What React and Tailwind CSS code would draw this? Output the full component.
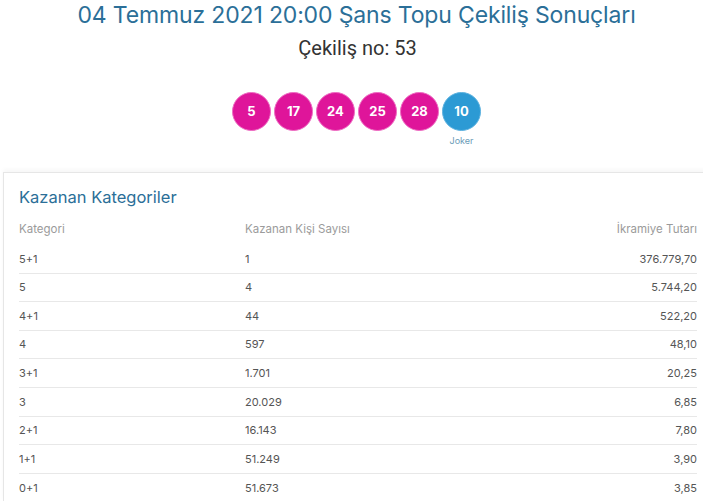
import React from "react";

const rows = [
  ["5+1", "1", "376.779,70"],
  ["5", "4", "5.744,20"],
  ["4+1", "44", "522,20"],
  ["4", "597", "48,10"],
  ["3+1", "1.701", "20,25"],
  ["3", "20.029", "6,85"],
  ["2+1", "16.143", "7,80"],
  ["1+1", "51.249", "3,90"],
  ["0+1", "51.673", "3,85"],
];

const balls = ["5", "17", "24", "25", "28"];

export default function App() {
  return (
    <div className="w-[703px] h-[501px] overflow-hidden bg-white" style={{ fontFamily: "Inter, 'Noto Sans', sans-serif" }}>
      <div className="h-[30px] flex items-center justify-center pl-[10px] text-[23px] text-[#2b6f98] tracking-[-0.15px]">
        04 Temmuz 2021 20:00 Şans Topu Çekiliş Sonuçları
      </div>
      <div className="h-[36px] flex items-center justify-center pl-[12px] text-[20px] text-[#333]" style={{ fontFamily: "Roboto, sans-serif" }}>
        Çekiliş no: 53
      </div>
      <div className="mt-[26px] flex justify-center gap-[3px] pl-[10px]">
        {balls.map((b) => (
          <div key={b} className="w-[39px] h-[39px] rounded-full bg-[#df159a] border border-[#ee6cc2] flex items-center justify-center text-white text-[13px] font-bold">
            {b}
          </div>
        ))}
        <div className="flex flex-col items-center">
          <div className="w-[39px] h-[39px] rounded-full bg-[#2c9ad4] border border-[#5db2e0] flex items-center justify-center text-white text-[13px] font-bold">
            10
          </div>
          <div className="mt-[5px] text-[9px] text-[#6b9cb8] leading-[10px]">Joker</div>
        </div>
      </div>
      <div className="mt-[26px] ml-[3px] w-[720px] border-t border-l border-[#e6e6e6] bg-white shadow-[0_-3px_4px_rgba(0,0,0,0.03)] pl-[15px] pr-[26px]">
        <div className="pt-[13px] h-[42px] text-[16.5px] text-[#2b6f98] leading-[22px]">Kazanan Kategoriler</div>
        <div className="flex h-[30px] items-center text-[11.5px] text-[#9b9b9b]">
          <div className="w-[226px]">Kategori</div>
          <div className="flex-1">Kazanan Kişi Sayısı</div>
          <div>İkramiye Tutarı</div>
        </div>
        {rows.map((r, i) => (
          <div key={i} className={"flex h-[28.6px] items-center text-[11px] text-[#555] " + (i < rows.length - 1 ? "border-b border-[#e8e8e8]" : "")}>
            <div className="w-[226px]">{r[0]}</div>
            <div className="flex-1">{r[1]}</div>
            <div>{r[2]}</div>
          </div>
        ))}
      </div>
    </div>
  );
}
